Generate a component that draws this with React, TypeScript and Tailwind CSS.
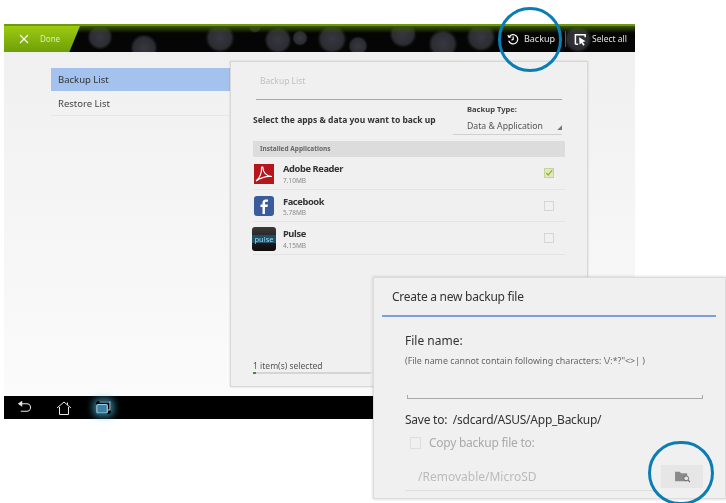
import { useId } from "react";

const font = "font-['Noto_Sans','Open_Sans',sans-serif]";

const apps = [
  { name: "Adobe Reader", size: "7.10MB", checked: true, icon: <AdobeIcon /> },
  { name: "Facebook", size: "5.78MB", checked: false, icon: <FacebookIcon /> },
  { name: "Pulse", size: "4.15MB", checked: false, icon: <PulseIcon /> },
];

function AdobeIcon() {
  return (
    <svg viewBox="0 0 22 22" className="h-[22px] w-[22px]">
      <rect x="1" y="1" width="20" height="20" fill="#b5161b" />
      <path d="M3 18c4-3 6-9 5.500-13 0-1.500 1.500-1.500 1.500 0 0 4 3 8 9 8.500-5-.5-11 1-16 4.500z" fill="none" stroke="#fff" strokeWidth="1.200" />
    </svg>
  );
}

function FacebookIcon() {
  return (
    <svg viewBox="0 0 22 22" className="h-[22px] w-[22px]">
      <rect x="1" y="1" width="20" height="20" rx="3" fill="#3b5c9c" />
      <path d="M12 19v-7h2.500l.4-2.500H12V8c0-.8.4-1.200 1.300-1.200H15V4.500h-2.200C10.500 4.500 9.500 5.800 9.500 7.800v1.700H7.500V12h2v7z" fill="#fff" />
    </svg>
  );
}

function PulseIcon() {
  return (
    <div className="flex h-[24px] w-[24px] shrink-0 items-center justify-center rounded-[3px] bg-gradient-to-b from-[#3a3a3a] to-[#0c0c0c]">
      <span className="w-full bg-[#1f4f68] text-center text-[7.500px] leading-[8px] text-[#9fd6ee]">pulse</span>
    </div>
  );
}

function Bokeh() {
  const id = useId();
  const spots = [
    [96, 11, 13], [140, 22, 14], [216, 12, 15], [251, 0, 7], [274, 14, 14], [296, 12, 8],
    [328, 13, 15], [354, 20, 10], [399, 8, 14], [439, 18, 15], [477, 11, 15], [574, 13, 14],
  ];
  return (
    <svg viewBox="0 0 631 26" preserveAspectRatio="none" className="h-full w-full">
      <defs>
        <radialGradient id={id}>
          <stop offset="0" stopColor="#44444e" stopOpacity="0.8" />
          <stop offset="0.75" stopColor="#3c3c46" stopOpacity="0.7" />
          <stop offset="1" stopColor="#2a2a30" stopOpacity="0" />
        </radialGradient>
      </defs>
      {spots.map(([cx, cy, r]) => (
        <circle key={`${cx}-${cy}`} cx={cx} cy={cy} r={r} fill={`url(#${id})`} />
      ))}
    </svg>
  );
}

function TopBar() {
  return (
    <div className="relative flex h-[28px] items-center overflow-hidden border-t-2 border-[#6f9a10] bg-[#050505]">
      <div className="absolute inset-0">
        <Bokeh />
      </div>
      <div className="absolute inset-x-0 top-0 h-[7px] bg-gradient-to-b from-[#3d5a08] to-transparent" />
      <div className="absolute inset-y-0 left-0 w-[76px] bg-gradient-to-b from-[#9ccb12] to-[#6f9f08] [clip-path:polygon(0_0,100%_0,86%_100%,0_100%)]" />
      <div className="relative flex items-center pl-[15px]">
        <svg viewBox="0 0 10 10" className="h-[10px] w-[10px]">
          <path d="M1 1l8 8M9 1l-8 8" stroke="#fff" strokeWidth="1.100" />
        </svg>
        <span className="ml-[11px] text-[8px] text-[#dbeeaa]">Done</span>
      </div>
      <div className="relative ml-auto flex items-center pr-[8px]">
        <svg viewBox="0 0 14 14" className="h-[12px] w-[12px]" fill="none" stroke="#fff" strokeWidth="1.400">
          <path d="M2.500 4.500A5.400 5.400 0 1 1 2 9" />
          <path d="M1 2.500l1.300 2.500 2.700-.6M7.200 4v3.300l-2 1" />
        </svg>
        <span className="ml-[5px] text-[9px] text-[#e4e4e4]">Backup</span>
        <span className="ml-[10px] h-[16px] w-px bg-[#555]" />
        <svg viewBox="0 0 14 14" className="ml-[8px] h-[13px] w-[13px]">
          <path d="M1.500 12V2h10.500v2.500M1.500 12h3" fill="none" stroke="#fff" strokeWidth="1.600" />
          <path d="M5.500 4.500l7 4.500-3 .7 2 3-1.500 1-2-3-2 1.800z" fill="#fff" />
        </svg>
        <span className="ml-[5px] text-[8.500px] text-[#e4e4e4]">Select all</span>
      </div>
    </div>
  );
}

function NavBar() {
  return (
    <div className="flex h-[23px] items-center bg-black pl-[13px]">
      <svg viewBox="0 0 16 14" className="h-[13px] w-[15px]" fill="none" stroke="#e8e8e8" strokeWidth="1.100">
        <path d="M4 3h6.500a4 4 0 0 1 0 8H4" />
        <path d="M5 .8L1.800 3 5 5.200z" fill="#e8e8e8" />
      </svg>
      <svg viewBox="0 0 16 14" className="ml-[24px] h-[14px] w-[16px]" fill="none" stroke="#e8e8e8" strokeWidth="1">
        <path d="M1 7l7-6 7 6M3.500 6v7.500h9V6" />
        <path d="M11.500 1.500v2.500" />
      </svg>
      <div className="ml-[24px] rounded-[3px] shadow-[0_0_7px_3px_rgba(80,190,230,0.6)]">
        <svg viewBox="0 0 15 13" className="block h-[13px] w-[15px]" fill="none" stroke="#8fd0ea" strokeWidth="1.200">
          <rect x="0.800" y="3.500" width="10.500" height="8.500" rx="1" fill="#3d7f9c" />
          <path d="M3.500 1h10.500v8h-2.500" />
        </svg>
      </div>
    </div>
  );
}

function Sidebar() {
  return (
    <div className="w-[179px] shrink-0 self-start pt-[16px]">
      <div className="flex h-[23px] items-center bg-[#a3c2ee] pt-[2px] pl-[7px] text-[9.500px] text-[#333]">Backup List</div>
      <div className="flex h-[25px] items-center border-b border-[#e6e6e6] pt-[2px] pl-[7px] text-[9.500px] text-[#444]">Restore List</div>
    </div>
  );
}

function AppRow({ name, size, checked, icon }: (typeof apps)[number]) {
  return (
    <div className="flex h-[32.5px] items-center border-b border-[#e4e4e4]">
      <div className="mt-[2px] mr-[8px] flex w-[22px] shrink-0 justify-center">{icon}</div>
      <div className="min-w-0 flex-1 pt-[3px] leading-none">
        <div className="text-[9.300px] font-bold tracking-[-0.4px] text-[#333]">{name}</div>
        <div className="mt-[4px] text-[6.500px] text-[#888]">{size}</div>
      </div>
      <div className={`mt-[1px] mr-[11px] flex h-[10px] w-[10px] items-center justify-center border ${checked ? "border-[#c5d49a] bg-[#dfe8c4]" : "border-[#d5d5d5]"}`}>
        {checked && (
          <svg viewBox="0 0 10 10" className="h-[10px] w-[10px]">
            <path d="M1.500 5l2.500 2.500 5-6" fill="none" stroke="#8fb62a" strokeWidth="1.600" />
          </svg>
        )}
      </div>
    </div>
  );
}

function BackupPanel() {
  return (
    <div className="mt-[9px] flex h-[326px] w-[358px] flex-col border border-[#d8d8d8] bg-[#f0f0f0] px-[22px] shadow-[0_0_2px_rgba(0,0,0,0.15)]">
      <div className="mx-[3px] flex h-[38px] items-end border-b border-[#a8a8a8] pb-[14px] pl-[4px] text-[8.500px] leading-none text-[#c0c0c0]">
        Backup List
      </div>
      <div className="flex h-[41px] items-start justify-between">
        <div className="mt-[16px] text-[8.500px] leading-none font-bold text-[#333]">Select the apps &amp; data you want to back up</div>
        <div className="mt-[6px] mr-[3px] w-[109px] border-b border-[#d0d0d0] pb-[4px] pl-[14px] leading-none">
          <div className="text-[7.600px] font-bold text-[#444]">Backup Type:</div>
          <div className="relative mt-[8px] text-[8.700px] text-[#555]">
            Data &amp; Application
            <span className="absolute right-0 bottom-0 h-[5px] w-[5px] bg-[#777] [clip-path:polygon(100%_0,100%_100%,0_100%)]" />
          </div>
        </div>
      </div>
      <div className="flex h-[16px] shrink-0 items-center bg-[#dcdcdc] pl-[7px] text-[6.500px] font-bold text-[#666]">Installed Applications</div>
      {apps.map((app) => (
        <AppRow key={app.name} {...app} />
      ))}
      <div className="mt-auto mb-[12px]">
        <div className="text-[8.500px] leading-none text-[#555]">1 item(s) selected</div>
        <div className="mt-[2px] h-[2px] w-[118px] bg-[#d5d5d5]">
          <div className="h-full w-[3px] bg-[#2e9a2e]" />
        </div>
      </div>
    </div>
  );
}

function Dialog() {
  return (
    <div className="absolute top-[277px] left-[373px] h-[222px] w-[353px] border border-[#dcdcdc] bg-[#f0f0f0] shadow-[0_0_3px_rgba(0,0,0,0.2)]">
      <div className="flex h-[37px] items-center pl-[18px] text-[12px] tracking-[-0.25px] text-[#333]">Create a new backup file</div>
      <div className="mr-[9px] ml-[8px] h-[2px] bg-[#7f9fdc]" />
      <div className="pr-[22px] pl-[31px]">
        <div className="mt-[18px] text-[12px] leading-none text-[#333]">File name:</div>
        <div className="mt-[10px] text-[8.900px] leading-none text-[#666]">{"(File name cannot contain following characters: \\/:*?\"<>| )"}</div>
        <div className="mt-[29px] ml-[2px] h-[4px] border-x border-b border-[#a8a8a8]" />
        <div className="mt-[15px] text-[12px] leading-none tracking-[-0.25px] text-[#333]">Save to:&nbsp; /sdcard/ASUS/App_Backup/</div>
        <div className="mt-[11px] flex items-center">
          <span className="ml-[5px] h-[12px] w-[11px] border border-[#dedede]" />
          <span className="ml-[8px] text-[12px] leading-none tracking-[-0.25px] text-[#aaa]">Copy backup file to:</span>
        </div>
        <div className="mt-[15px] flex items-start">
          <div className="flex h-[27px] flex-1 items-center border-b border-[#dedede] pl-[13px] text-[12px] text-[#bbb]">/Removable/MicroSD</div>
          <div className="mt-[1px] ml-[8px] flex h-[23px] w-[42px] items-center justify-center bg-[#e6e6e6]">
            <svg viewBox="0 0 18 14" className="h-[13px] w-[17px]">
              <path d="M1 2h5l1.500 1.500H14V12H1z" fill="#8a8a8a" />
              <circle cx="13" cy="9" r="2.600" fill="#e6e6e6" stroke="#666" />
              <path d="M15 11l2 2" stroke="#666" strokeWidth="1.200" />
            </svg>
          </div>
        </div>
      </div>
    </div>
  );
}

export default function App() {
  return (
    <div className={`relative h-[503px] w-[726px] overflow-hidden bg-white blur-[0.5px] ${font}`}>
      <div className="ml-[4px] flex h-[419px] w-[631px] flex-col pt-[24px]">
        <TopBar />
        <div className="flex flex-1 bg-gradient-to-b from-[#f0f0f0] to-[#fbfbfb] pl-[47px]">
          <Sidebar />
          <BackupPanel />
        </div>
        <NavBar />
      </div>
      <Dialog />
      <span className="absolute top-[7px] left-[498px] h-[65px] w-[64px] rounded-full border-[3px] border-[#0b7db5]" />
      <span className="absolute top-[441px] left-[648px] h-[64px] w-[66px] rounded-full border-[3px] border-[#0b7db5]" />
    </div>
  );
}
